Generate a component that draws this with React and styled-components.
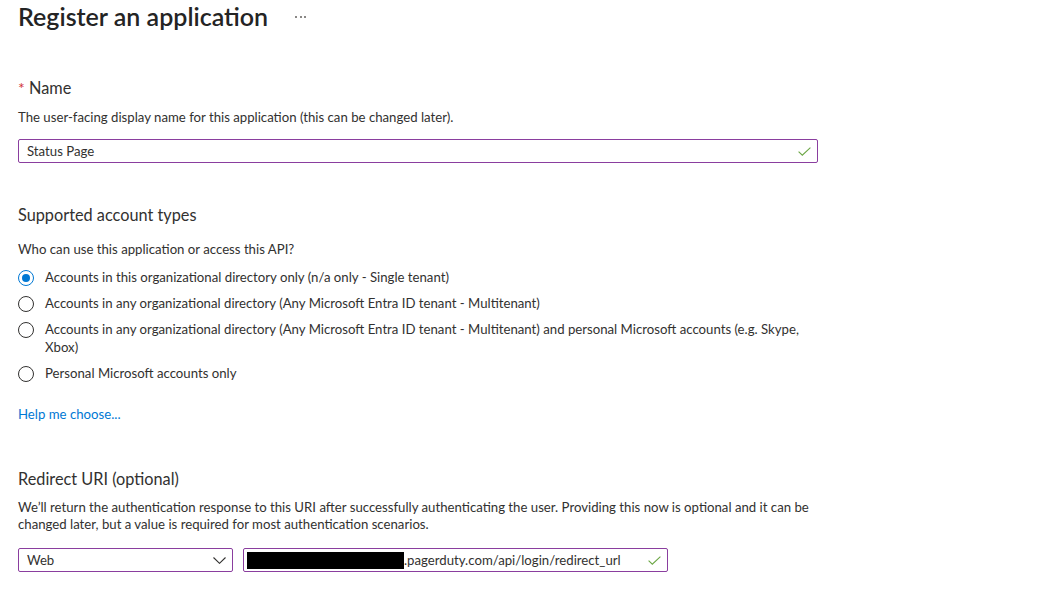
import React from 'react'
import styled, { createGlobalStyle } from 'styled-components'

const GlobalStyle = createGlobalStyle`
  body {
    margin: 0;
    background: #ffffff;
    font-family: "Segoe UI", Lato, "Liberation Sans", sans-serif;
    color: #323130;
  }
`

const accountTypes = [
  { id: 'single', label: 'Accounts in this organizational directory only (n/a only - Single tenant)' },
  { id: 'multi', label: 'Accounts in any organizational directory (Any Microsoft Entra ID tenant - Multitenant)' },
  {
    id: 'multi-personal',
    label:
      'Accounts in any organizational directory (Any Microsoft Entra ID tenant - Multitenant) and personal Microsoft accounts (e.g. Skype, Xbox)',
  },
  { id: 'personal', label: 'Personal Microsoft accounts only' },
]

const Check = () => (
  <svg width="13" height="9" viewBox="0 0 13 9" fill="none">
    <path d="M0.6 4.6 L4.3 8.2 L12.4 0.6" stroke="#6ba644" strokeWidth="1.1" />
  </svg>
)

const Chevron = () => (
  <svg width="13" height="7" viewBox="0 0 13 7" fill="none">
    <path d="M0.5 0.5 L6.5 6.3 L12.5 0.5" stroke="#323130" strokeWidth="1.1" />
  </svg>
)

const App = () => {
  return (
    <Page>
      <GlobalStyle />
      <Header>
        <Title>Register an application</Title>
        <More>
          <span />
          <span />
          <span />
        </More>
      </Header>

      <SectionTitle $top={45}>
        <Required>*</Required> Name
      </SectionTitle>
      <Text $top={9}>The user-facing display name for this application (this can be changed later).</Text>
      <Field $top={13} $width={800}>
        <Value>Status Page</Value>
        <Check />
      </Field>

      <SectionTitle $top={41}>Supported account types</SectionTitle>
      <Text $top={14}>Who can use this application or access this API?</Text>
      <RadioList>
        {accountTypes.map((item, i) => (
          <RadioRow key={item.id}>
            <Radio $checked={i === 0} />
            <RadioLabel>{item.label}</RadioLabel>
          </RadioRow>
        ))}
      </RadioList>

      <Link $top={23}>Help me choose...</Link>

      <SectionTitle $top={45}>Redirect URI (optional)</SectionTitle>
      <Text $top={9} $lh={17}>
        We’ll return the authentication response to this URI after successfully authenticating the user. Providing
        this now is optional and it can be changed later, but a value is required for most authentication scenarios.
      </Text>
      <UriRow>
        <Field $width={215}>
          <Value>Web</Value>
          <Chevron />
        </Field>
        <Field $width={425} $pl={3}>
          <UrlValue>
            <Redacted />
            .pagerduty.com/api/login/redirect_url
          </UrlValue>
          <Check />
        </Field>
      </UriRow>
    </Page>
  )
}

export default App

const Page = styled.div`
  padding: 0 18px;
  width: 820px;
`

const Header = styled.div`
  display: flex;
  align-items: center;
  gap: 27px;
  height: 32px;
`

const Title = styled.h1`
  margin: 0;
  font-size: 25px;
  line-height: 32px;
  font-weight: 600;
  color: #242424;
`

const More = styled.div`
  display: flex;
  gap: 2.5px;
  padding-top: 1px;

  span {
    width: 2px;
    height: 2px;
    background: #8a8886;
  }
`

const SectionTitle = styled.div`
  margin-top: ${p => p.$top || 0}px;
  font-size: 16.3px;
  line-height: 22px;
`

const Required = styled.span`
  color: #d13438;
  font-size: 16px;
`

const Text = styled.p`
  margin: ${p => p.$top || 0}px 0 0;
  font-size: 13.2px;
  line-height: ${p => p.$lh || 18}px;
`

const Field = styled.div`
  box-sizing: border-box;
  margin-top: ${p => p.$top || 0}px;
  width: ${p => p.$width}px;
  height: 24px;
  border: 1px solid #8a3e9f;
  border-radius: 2px;
  display: flex;
  align-items: center;
  justify-content: space-between;
  padding: 0 6px 0 ${p => p.$pl || 8}px;
  font-size: 13.2px;
`

const Value = styled.span`
  line-height: 18px;
`

const UrlValue = styled.span`
  display: flex;
  align-items: center;
  line-height: 18px;
`

const Redacted = styled.span`
  display: inline-block;
  width: 157px;
  height: 17px;
  background: #000;
`

const RadioList = styled.div`
  margin-top: 10px;
  display: flex;
  flex-direction: column;
  gap: 8px;
`

const RadioRow = styled.label`
  display: flex;
  align-items: flex-start;
  gap: 11px;
  font-size: 13.2px;
  line-height: 18px;
`

const Radio = styled.span`
  box-sizing: border-box;
  flex: none;
  width: 16px;
  height: 16px;
  margin-top: 2px;
  border-radius: 50%;
  border: 1px solid ${p => (p.$checked ? '#0078d4' : '#323130')};
  display: flex;
  align-items: center;
  justify-content: center;

  &::after {
    content: '';
    display: ${p => (p.$checked ? 'block' : 'none')};
    width: 8px;
    height: 8px;
    border-radius: 50%;
    background: #0078d4;
  }
`

const RadioLabel = styled.span`
  max-width: 770px;
`

const Link = styled.a`
  display: block;
  margin-top: ${p => p.$top || 0}px;
  font-size: 13.2px;
  line-height: 18px;
  color: #0078d4;
  cursor: pointer;
`

const UriRow = styled.div`
  margin-top: 15px;
  display: flex;
  gap: 10px;
`
